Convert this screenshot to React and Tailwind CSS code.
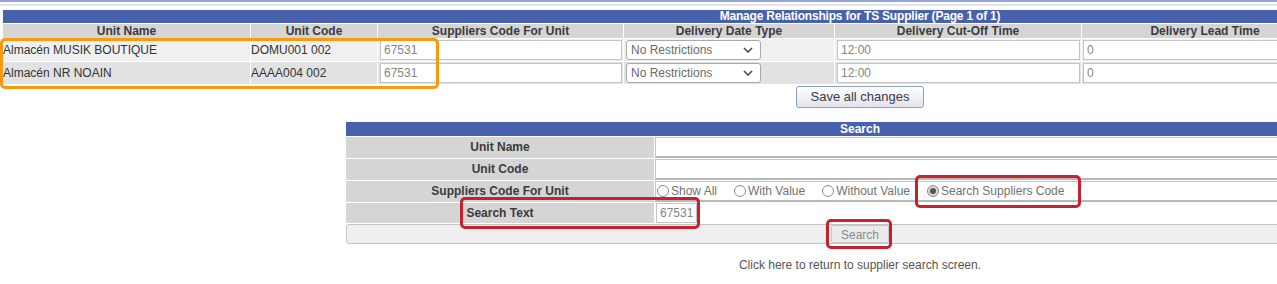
import React from 'react';

const headers = ['Unit Name', 'Unit Code', 'Suppliers Code For Unit', 'Delivery Date Type', 'Delivery Cut-Off Time', 'Delivery Lead Time', ''];

const units = [
  { name: 'Almacén MUSIK BOUTIQUE', code: 'DOMU001 002', bg: 'bg-[#f0f0f0]' },
  { name: 'Almacén NR NOAIN', code: 'AAAA004 002', bg: 'bg-[#e2e2e2]' },
];

const radios = [
  { label: 'Show All', checked: false },
  { label: 'With Value', checked: false },
  { label: 'Without Value', checked: false },
  { label: 'Search Suppliers Code', checked: true },
];

function TextBox({ value, className = '' }) {
  return (
    <input
      readOnly
      value={value}
      className={`h-[20px] border border-[#c4c4c4] bg-white px-[3px] text-[12px] text-[#858585] outline-none ${className}`}
    />
  );
}

function RestrictionSelect() {
  return (
    <div className="ml-[2px] flex h-[20px] w-[135px] items-center justify-between rounded-[3px] border border-[#a9a9a9] bg-white pl-[4px] pr-[7px] text-[12px] text-[#6a6a6a]">
      <span>No Restrictions</span>
      <svg width="10" height="6" viewBox="0 0 10 6">
        <path d="M1 1l4 4 4-4" fill="none" stroke="#4a4a4a" strokeWidth="1.6" />
      </svg>
    </div>
  );
}

function Radio({ label, checked }) {
  return (
    <div className="flex items-center gap-[2px]">
      <span className={`flex h-[12px] w-[12px] items-center justify-center rounded-full border border-[#8c8c8c] ${checked ? 'bg-[#d9d9d9]' : 'bg-white'}`}>
        {checked && <span className="h-[6px] w-[6px] rounded-full bg-[#555]" />}
      </span>
      <span>{label}</span>
    </div>
  );
}

export default function App() {
  return (
    <div className="h-[284px] w-full overflow-hidden bg-white font-['Liberation_Sans',Arial,sans-serif]">
      <div className="h-[2px] w-[1720px] bg-[#98a4d5]" />
      <div className="mt-[2px] h-[2px] w-[1720px] bg-[#dfe3f2]" />

      <div className="relative w-[1720px] px-[3px] pt-[4px]">
        {/* relationships table */}
        <div className="grid grid-cols-[247px_126px_245px_210px_246px_246px_1fr] gap-[1px]">
          <div className="col-span-7 h-[13px] bg-[#4861ad] text-center text-[12px] font-bold leading-[13px] tracking-[-0.2px] text-white">
            Manage Relationships for TS Supplier (Page 1 of 1)
          </div>
          {headers.map((h, i) => (
            <div key={i} className="h-[14px] bg-[#d5d5d5] text-center text-[12px] font-bold leading-[14px] text-[#3b3b3b]">
              {h}
            </div>
          ))}
          {units.map((u) => (
            <React.Fragment key={u.code}>
              <div className={`flex h-[22px] items-center text-[12px] text-[#333] ${u.bg}`}>{u.name}</div>
              <div className={`flex h-[22px] items-center text-[12px] text-[#333] ${u.bg}`}>{u.code}</div>
              <div className={`flex h-[22px] items-center ${u.bg}`}>
                <TextBox value="67531" className="ml-[2px] w-[242px]" />
              </div>
              <div className={`flex h-[22px] items-center ${u.bg}`}>
                <RestrictionSelect />
              </div>
              <div className={`flex h-[22px] items-center ${u.bg}`}>
                <TextBox value="12:00" className="ml-[2px] w-[243px]" />
              </div>
              <div className={`flex h-[22px] items-center ${u.bg}`}>
                <TextBox value="0" className="ml-[1px] w-[245px]" />
              </div>
              <div className={`h-[22px] ${u.bg}`} />
            </React.Fragment>
          ))}
        </div>

        <div className="mt-[2px] flex justify-center">
          <button className="h-[22px] w-[128px] rounded-[3px] border border-[#8e9fc4] bg-gradient-to-b from-white to-[#e2e3ec] text-[13px] text-[#3a3a48]">
            Save all changes
          </button>
        </div>

        {/* search panel */}
        <div className="relative mx-auto mt-[14px] w-[1028px]">
          <div className="grid grid-cols-[308px_1fr] gap-[1px]">
            <div className="col-span-2 h-[14px] bg-[#4861ad] text-center text-[12px] font-bold leading-[14px] text-white">
              Search
            </div>

            <div className="h-[21px] bg-[#d5d5d5] text-center text-[12px] font-bold leading-[21px] text-[#3b3b3b]">Unit Name</div>
            <input readOnly className="h-[21px] border border-[#c4c4c4] border-b-2 border-b-[#b8b8b8] bg-white outline-none" />

            <div className="h-[21px] bg-[#d5d5d5] text-center text-[12px] font-bold leading-[21px] text-[#3b3b3b]">Unit Code</div>
            <input readOnly className="h-[21px] border border-[#c4c4c4] border-b-2 border-b-[#b8b8b8] bg-white outline-none" />

            <div className="h-[21px] bg-[#d5d5d5] text-center text-[12px] font-bold leading-[21px] text-[#3b3b3b]">Suppliers Code For Unit</div>
            <div className="flex h-[21px] items-center gap-[17px] border border-[#c4c4c4] border-b-2 border-b-[#b8b8b8] bg-white pl-[1px] text-[12px] text-[#727272]">
              {radios.map((r) => (
                <Radio key={r.label} {...r} />
              ))}
            </div>

            <div className="h-[20px] bg-[#d5d5d5] text-center text-[12px] font-bold leading-[20px] text-[#3b3b3b]">Search Text</div>
            <div className="flex h-[20px] items-center bg-white">
              <TextBox value="67531" className="ml-[1px] h-[18px] w-[41px] px-[2px]" />
            </div>

            <div className="col-span-2 flex h-[20px] items-center justify-center rounded-l-[3px] border border-[#c4c4c4] bg-[#efefef]">
              <button className="h-[18px] w-[58px] rounded-[2px] border border-[#cacaca] bg-[#ebebeb] text-[12px] text-[#8a8a8a]">
                Search
              </button>
            </div>
          </div>

          {/* annotation highlights */}
          <div className="pointer-events-none absolute left-[114px] top-[75px] h-[32px] w-[240px] rounded-[5px] border-[3px] border-[#c8202f]" />
          <div className="pointer-events-none absolute left-[569px] top-[53px] h-[33px] w-[166px] rounded-[5px] border-[3px] border-[#c8202f]" />
          <div className="pointer-events-none absolute left-[480px] top-[97px] h-[30px] w-[66px] rounded-[5px] border-[3px] border-[#c8202f]" />

          <p className="mt-[12px] text-center text-[12px] text-[#555]">Click here to return to supplier search screen.</p>
        </div>

        <div className="pointer-events-none absolute left-0 top-[32px] h-[51px] w-[439px] rounded-[5px] border-[3px] border-[#f79a0c]" />
      </div>
    </div>
  );
}
